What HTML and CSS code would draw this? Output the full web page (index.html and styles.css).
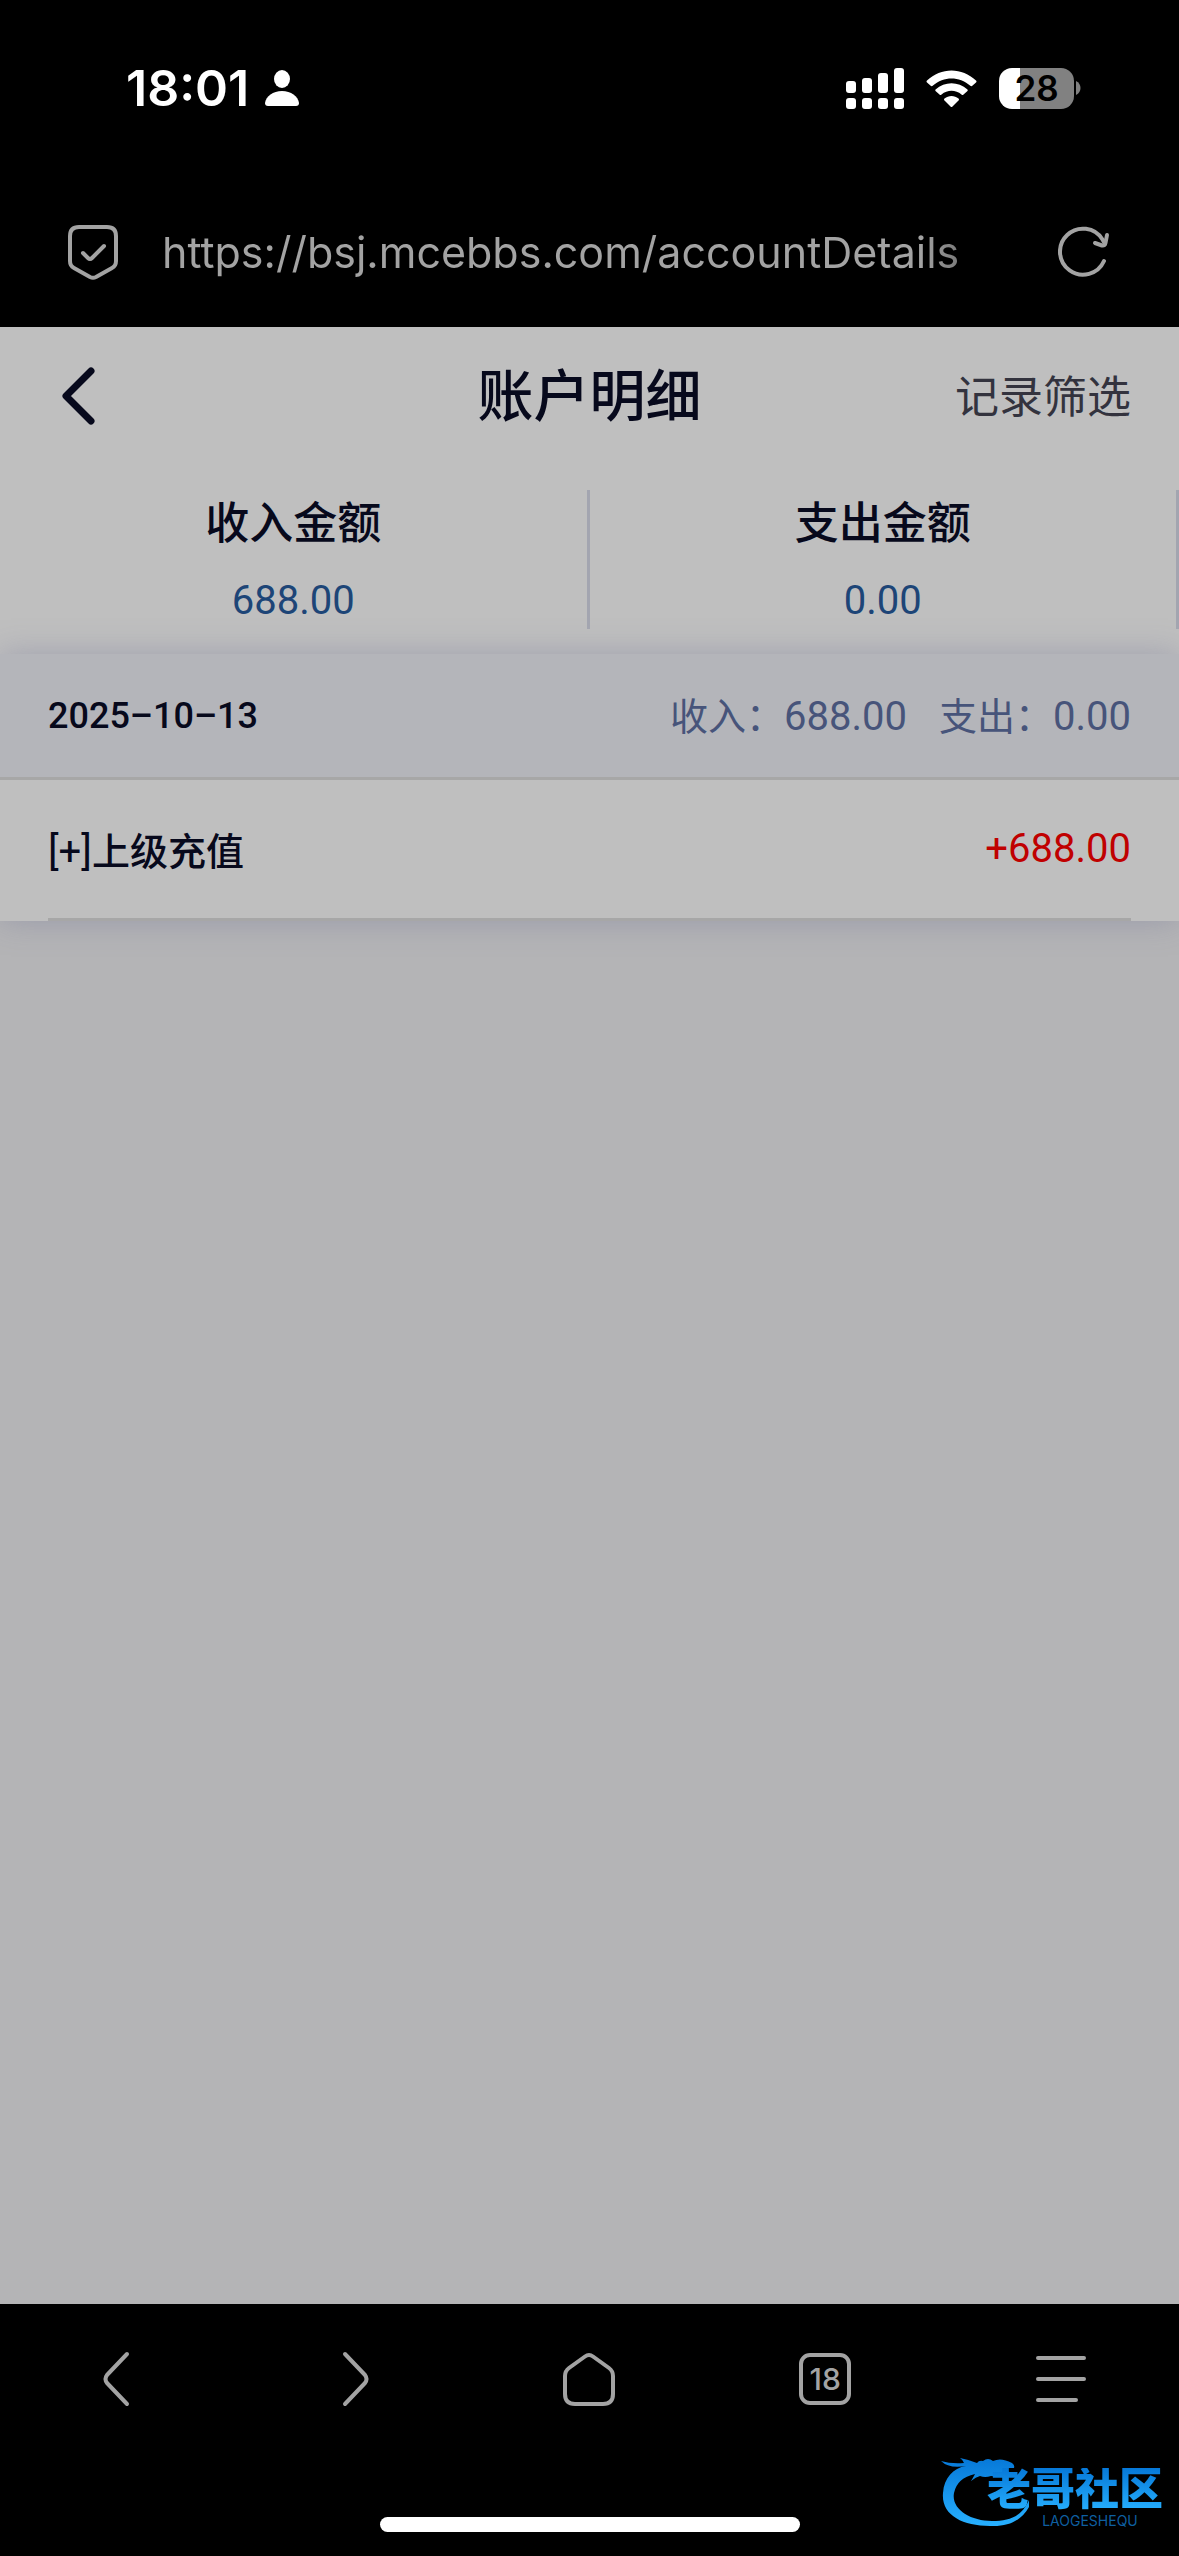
FILE: index.html
```html
<!DOCTYPE html>
<html lang="zh-CN">

<head>
    <meta charset="UTF-8" />
    <meta name="viewport" content="width=device-width, initial-scale=1.0" />
    <title>账户明细</title>
    <link rel="stylesheet" href="styles.css">
</head>

<body>
    <div class="status-bar">
        <div class="status-left">
            <span class="time">18:01</span>
            <svg width="34" height="36" viewBox="0 0 34 36" fill="#fff">
                <ellipse cx="17" cy="9" rx="8" ry="9" />
                <path d="M3 36C1 36 0 35 0 33C1 26 8 21 17 21S33 26 34 33C34 35 33 36 31 36Z" />
            </svg>
        </div>
        <div class="status-right">
            <svg width="58" height="41" viewBox="0 0 58 41" fill="#fff">
                <rect x="0" y="13" width="10" height="12" rx="3" />
                <rect x="16" y="10" width="10" height="15" rx="3" />
                <rect x="32" y="5" width="10" height="20" rx="3" />
                <rect x="48" y="0" width="10" height="25" rx="3" />
                <rect x="0" y="30" width="10" height="11" rx="3" />
                <rect x="16" y="30" width="10" height="11" rx="3" />
                <rect x="32" y="30" width="10" height="11" rx="3" />
                <rect x="48" y="30" width="10" height="11" rx="3" />
            </svg>
            <svg width="51" height="37" viewBox="0 0 51 37" fill="#fff">
                <path d="M1 10.500Q0 11.500 1 12.500L5 16Q6 16.500 7 15.500C17.500 6 33.500 6 44 15.500Q45 16.500 46 16L50 12.500Q51 11.500 50 10.500C36 -3 15 -3 1 10.500Z" />
                <path d="M9.500 19.500Q9 20.500 9.500 21L13.500 24.500Q14.500 25.500 15.500 24.500C21.500 19.500 29.500 19.500 35.500 24.500Q36.500 25.500 37.500 24.500L41.500 21Q42 20.500 41.500 19.500C32 11 19 11 9.500 19.500Z" />
                <path d="M18.500 28.500Q17.500 29.500 18.500 30.500L24.500 36.500Q25.500 37.500 26.500 36.500L32.500 30.500Q33.500 29.500 32.500 28.500C28.500 25 22.500 25 18.500 28.500Z" />
            </svg>
            <div class="battery">
                <span class="battery-level">28</span>
                <svg width="5" height="14" viewBox="0 0 5 14" fill="#818181">
                    <path d="M0 0C6 3 6 11 0 14Z" />
                </svg>
            </div>
        </div>
    </div>

    <div class="address-bar">
        <svg width="50" height="56" viewBox="0 0 50 56" fill="none" stroke="#a3a3a3" stroke-width="4" stroke-linecap="round" stroke-linejoin="round">
            <path d="M11 3H39Q48 3 48 12V37Q48 42 44 44L28 53Q25 54.500 22 53L6 44Q2 42 2 37V12Q2 3 11 3Z" />
            <path d="M15 29L20 34Q22 36 24 34L36 22" />
        </svg>
        <a class="url" href="#">https://bsj.mcebbs.com/accountDetails</a>
        <button class="icon-btn" aria-label="刷新">
            <svg width="52" height="52" viewBox="0 0 52 52" fill="none" stroke="#a3a3a3" stroke-width="4" stroke-linecap="round" stroke-linejoin="round">
                <path d="M46 35A23 23 0 1 1 44.500 13.500L47 18" />
                <path d="M37 17L44 19.500Q47 20 47.500 17L49 9" />
            </svg>
        </button>
    </div>

    <main class="page">
        <header class="nav">
            <button class="icon-btn nav-back" aria-label="返回">
                <svg width="34" height="58" viewBox="0 0 34 58" fill="none" stroke="#07091c" stroke-width="7" stroke-linecap="round" stroke-linejoin="round">
                    <path d="M29 4L4 29L29 54" />
                </svg>
            </button>
            <h1 class="nav-title">账户明细</h1>
            <a class="nav-filter" href="#">记录筛选</a>
        </header>

        <section class="totals">
            <div class="total">
                <span class="total-name">收入金额</span>
                <span class="total-value">688.00</span>
            </div>
            <div class="total">
                <span class="total-name">支出金额</span>
                <span class="total-value">0.00</span>
            </div>
        </section>

        <section class="day">
            <div class="day-head">
                <span class="day-date">2025–10–13</span>
                <span class="day-sum">
                    <span>收入：<span class="num">688.00</span></span>
                    <span>支出：<span class="num">0.00</span></span>
                </span>
            </div>
            <div class="record">
                <span><span class="num">[+]</span>上级充值</span>
                <span class="num amount">+688.00</span>
            </div>
        </section>
    </main>

    <footer class="toolbar">
        <nav class="tools">
            <button class="icon-btn" aria-label="后退">
                <svg width="52" height="56" viewBox="0 0 52 56">
                    <path d="M35 3L15 24Q12 28 15 32L35 53" />
                </svg>
            </button>
            <button class="icon-btn" aria-label="前进">
                <svg width="52" height="56" viewBox="0 0 52 56">
                    <path d="M17 3L37 24Q40 28 37 32L17 53" />
                </svg>
            </button>
            <button class="icon-btn" aria-label="主页">
                <svg width="52" height="56" viewBox="0 0 52 56">
                    <path d="M22 5.500Q26 2.500 30 5.500L46 17Q50 20 50 25V43Q50 53 40 53H12Q2 53 2 43V25Q2 20 6 17Z" />
                </svg>
            </button>
            <button class="icon-btn tabs">18</button>
            <button class="icon-btn" aria-label="菜单">
                <svg width="52" height="56" viewBox="0 0 52 56">
                    <path d="M3 7H49M3 28H49M3 49H41" />
                </svg>
            </button>
        </nav>
        <div class="home-line"></div>
    </footer>

    <div class="brand">
        <svg class="brand-dragon" width="94" height="80" viewBox="0 0 94 80">
            <defs>
                <linearGradient id="dragon" x1="0" y1="0" x2="0" y2="1">
                    <stop offset="0" stop-color="#0678d8" />
                    <stop offset="1" stop-color="#27b0ff" />
                </linearGradient>
            </defs>
            <path fill="url(#dragon)" d="M0 11Q10 14 23 13Q22 10 19 8Q29 10 36 13Q38 10 42 11Q47 7 52 11Q60 7 71 13Q74 15 73 18L62 18Q66 22 72 23Q70 26 63 25Q56 27 50 26Q44 28 39 26Q35 27 30 31Q33 26 34 24Q16 28 13 43C10 59 29 71 51 71C69 71 81 66 88 50L88 57C80 71 67 77 49 76C21 76 0 65 2 43C3 28 12 18 25 16Q8 19 0 11Z" />
        </svg>
        <div class="brand-text">
            <span class="brand-name">老哥社区</span>
            <span class="brand-latin">LAOGESHEQU</span>
        </div>
    </div>
</body>

</html>
```

FILE: styles.css
```css
* {
    box-sizing: border-box;
}

body {
    margin: 0;
    min-height: 100vh;
    display: flex;
    flex-direction: column;
    position: relative;
    background-color: #000;
    color: #07091c;
    font-family: Roboto, "Noto Sans CJK SC", sans-serif;
    font-size: 38px;
}

svg {
    display: block;
}

a {
    color: inherit;
    text-decoration: none;
}

.icon-btn {
    padding: 0;
    border: none;
    background: none;
    display: flex;
    justify-content: center;
    align-items: center;
}

/* phone status bar */
.status-bar {
    height: 176px;
    padding: 0 98px 0 126px;
    display: flex;
    justify-content: space-between;
    align-items: center;
    color: #fff;
    font-family: Inter, sans-serif;
}

.status-left {
    display: flex;
    align-items: center;
    gap: 16px;
}

.status-right {
    display: flex;
    align-items: center;
    gap: 22px;
}

.time {
    font-size: 50px;
    font-weight: 600;
}

.battery {
    display: flex;
    align-items: center;
    gap: 2px;
}

.battery-level {
    width: 75px;
    height: 41px;
    border-radius: 13px;
    background: linear-gradient(to right, #fff 28%, #818181 28%);
    color: #000;
    font-size: 35px;
    font-weight: 600;
    line-height: 41px;
    text-align: center;
}

/* browser address bar */
.address-bar {
    height: 151px;
    padding: 0 69px 0 68px;
    display: flex;
    align-items: center;
    gap: 44px;
    color: #a3a3a3;
}

.url {
    flex: 1;
    overflow: hidden;
    white-space: nowrap;
    font-family: Inter, sans-serif;
    font-size: 43px;
    background: linear-gradient(to right, #a3a3a3 760px, #6b6b6b 810px);
    -webkit-background-clip: text;
    background-clip: text;
    color: transparent;
}

/* page */
.page {
    flex: 1;
    background-color: #b4b4b6;
}

.nav {
    height: 134px;
    padding: 0 48px;
    display: grid;
    grid-template-columns: 1fr auto 1fr;
    align-items: center;
    background-color: #bfbfbf;
}

.nav-back {
    justify-self: start;
    padding: 4px 0 0 14px;
}

.nav-title {
    margin: 0;
    padding-bottom: 6px;
    font-size: 56px;
    font-weight: 500;
}

.nav-filter {
    justify-self: end;
    color: #33333e;
    font-size: 44px;
}

.totals {
    padding: 29px 0 25px;
    display: flex;
    background-color: #bfbfbf;
}

.total {
    flex: 1;
    height: 139px;
    border-right: 3px solid #a3a5b0;
    display: flex;
    flex-direction: column;
    justify-content: space-between;
    align-items: center;
}

.total-name {
    font-size: 44px;
    font-weight: 500;
    line-height: 68px;
}

.total-value {
    color: #1d4577;
    font-size: 40px;
    line-height: 56px;
}

.day {
    box-shadow: 0 0 30px rgba(112, 116, 150, 0.4);
    background-color: #bfbfbf;
}

.day-head {
    height: 126px;
    padding: 0 48px;
    display: flex;
    justify-content: space-between;
    align-items: center;
    background-color: #b4b5ba;
    border-bottom: 3px solid #a7a7a7;
}

.day-date {
    font-size: 36px;
    font-weight: 500;
}

.day-sum {
    padding-bottom: 4px;
    display: flex;
    gap: 32px;
    color: #47547a;
}

.record {
    height: 141px;
    margin: 0 48px;
    padding-bottom: 2px;
    display: flex;
    justify-content: space-between;
    align-items: center;
    border-bottom: 3px solid #a7a7a7;
    font-weight: 500;
}

.num {
    font-size: 40px;
    font-weight: 400;
}

.amount {
    color: #c00000;
}

/* browser toolbar */
.toolbar {
    height: 252px;
    padding: 47px 0 24px;
    display: flex;
    flex-direction: column;
    justify-content: space-between;
    align-items: center;
}

.tools {
    width: 100%;
    display: grid;
    grid-template-columns: repeat(5, 1fr);
    justify-items: center;
    align-items: center;
}

.tools svg {
    fill: none;
    stroke: #a3a3a3;
    stroke-width: 4;
    stroke-linecap: round;
    stroke-linejoin: round;
}

.tabs {
    width: 52px;
    height: 52px;
    border: 4px solid #a3a3a3;
    border-radius: 11px;
    color: #a3a3a3;
    font-family: Inter, sans-serif;
    font-size: 30px;
    font-weight: 500;
}

.home-line {
    width: 420px;
    height: 15px;
    border-radius: 8px;
    background-color: #fff;
}

/* community logo in the corner */
.brand {
    position: absolute;
    right: 16px;
    bottom: 22px;
}

.brand-dragon {
    position: absolute;
    right: 128px;
    bottom: 4px;
}

.brand-text {
    position: relative;
    display: flex;
    flex-direction: column;
    align-items: center;
    gap: 2px;
    padding-bottom: 6px;
}

.brand-name {
    font-size: 44px;
    font-weight: 900;
    line-height: 44px;
    background: linear-gradient(#0678d8, #27b0ff);
    -webkit-background-clip: text;
    background-clip: text;
    color: transparent;
}

.brand-latin {
    padding-left: 30px;
    color: #0e5fa0;
    font-family: Inter, sans-serif;
    font-size: 14px;
    line-height: 14px;
}
```
